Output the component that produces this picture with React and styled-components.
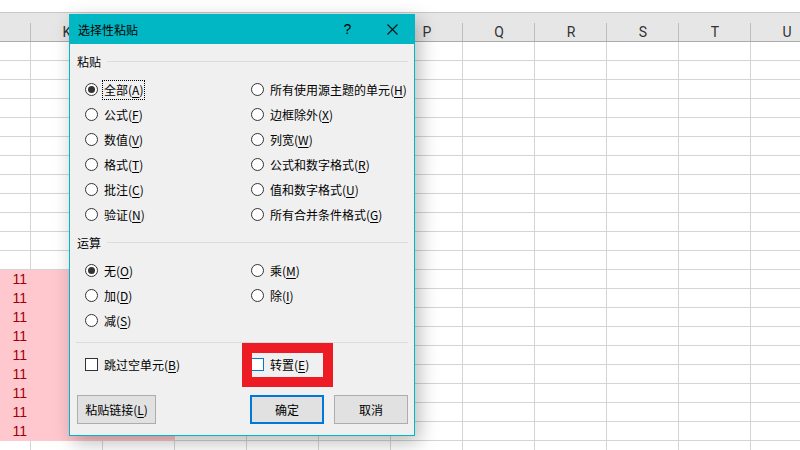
import React from "react";
import styled, { createGlobalStyle } from "styled-components";

const GlobalStyle = createGlobalStyle`
  html, body {
    margin: 0;
    padding: 0;
    background: #ffffff;
    overflow: hidden;
  }
  * { box-sizing: border-box; }
`;

const columns = ["", "K", "L", "M", "N", "O", "P", "Q", "R", "S", "T", "U"];
const ROWS = 22;
const PINK_FROM = 12;
const PINK_TO = 20;

const Page = styled.div`
  position: relative;
  width: 800px;
  height: 450px;
  overflow: hidden;
  background: #fff;
`;

const Sheet = styled.div`
  padding-top: 12px;
  display: grid;
  grid-template-columns: 31px repeat(11, 72px);
  grid-template-rows: 30px;
  grid-auto-rows: 19px;
`;

const HeadCell = styled.div`
  background: #e6e6e6 linear-gradient(#bcbcbc, #bcbcbc) right bottom / 1px 18px no-repeat;
  border-top: 1px solid #c6c6c6;
  border-bottom: 1px solid #ababab;
  font-family: Roboto, "Liberation Sans", sans-serif;
  font-size: 14px;
  color: #333;
  display: flex;
  align-items: flex-end;
  justify-content: center;
  padding-bottom: 1px;
`;

const Cell = styled.div`
  border-right: 1px solid ${(p) => (p.$pink ? "#ffc7ce" : "#d4d4d4")};
  border-bottom: 1px solid ${(p) => (p.$pink ? "#ffc7ce" : "#d4d4d4")};
  background: ${(p) => (p.$pink ? "#ffc7ce" : "#fff")};
  color: #9c0006;
  font-family: "Liberation Sans", sans-serif;
  font-size: 14px;
  line-height: 19px;
  text-align: right;
  padding-right: 3px;
`;

const Dialog = styled.div`
  position: absolute;
  left: 69px;
  top: 14px;
  width: 346px;
  height: 422px;
  border: 1px solid #00b7c3;
  background: #f0f0f0;
  box-shadow: 4px 6px 18px rgba(0, 0, 0, 0.28);
  font-family: "Noto Sans CJK SC", "Noto Sans", sans-serif;
  font-size: 12px;
  color: #000;
  display: flex;
  flex-direction: column;
`;

const TitleBar = styled.div`
  height: 30px;
  margin: -1px -1px 0;
  background: #00b7c3;
  display: flex;
  align-items: center;
  padding-left: 9px;
  font-size: 12px;
`;

const Title = styled.div`
  flex: 1;
`;

const TitleButton = styled.div`
  width: 45px;
  height: 30px;
  display: flex;
  align-items: center;
  justify-content: center;
  font-family: "Liberation Sans", sans-serif;
  font-size: 14px;
`;

const Body = styled.div`
  flex: 1;
  display: flex;
  flex-direction: column;
  padding: 0 6px 0 7px;
`;

const SectionHead = styled.div`
  height: 18px;
  margin-top: ${(p) => p.$top}px;
  display: flex;
  align-items: center;
  gap: 6px;
  &::after {
    content: "";
    flex: 1;
    height: 1px;
    background: #dcdcdc;
  }
`;

const OptionGrid = styled.div`
  margin-top: 7px;
  padding-left: 8px;
  display: grid;
  grid-template-columns: 166px 1fr;
  grid-auto-rows: 25px;
`;

const Option = styled.div`
  display: flex;
  align-items: center;
  gap: 4px;
`;

const RadioMark = styled.span`
  width: 13px;
  height: 13px;
  border-radius: 50%;
  border: 1px solid #333;
  background: #fff;
  display: flex;
  align-items: center;
  justify-content: center;
  flex: none;
  &::after {
    content: "";
    width: 7px;
    height: 7px;
    border-radius: 50%;
    background: ${(p) => (p.$on ? "#333" : "transparent")};
  }
`;

const Label = styled.span`
  padding: 1px 1px;
  line-height: 16px;
  border: 1px ${(p) => (p.$focus ? "dotted #000" : "solid transparent")};
  white-space: nowrap;
`;

const Key = styled.u`
  text-underline-offset: 2px;
`;

const Divider = styled.div`
  height: 1px;
  margin: 9px 0 0 -1px;
  background: #dcdcdc;
`;

const CheckRow = styled.div`
  margin-top: 9px;
  padding-left: 8px;
  height: 25px;
  display: grid;
  grid-template-columns: 166px 1fr;
`;

const Box = styled.span`
  width: 13px;
  height: 13px;
  border: 1px solid ${(p) => (p.$hover ? "#0078d7" : "#333")};
  background: #fff;
  flex: none;
`;

const Buttons = styled.div`
  margin-top: 18px;
  display: flex;
`;

const Button = styled.div`
  width: ${(p) => p.$w}px;
  height: 29px;
  margin-left: ${(p) => p.$gap || 0}px;
  background: #e1e1e1;
  border: ${(p) => (p.$default ? "2px solid #0078d7" : "1px solid #adadad")};
  display: flex;
  align-items: center;
  justify-content: center;
  white-space: nowrap;
`;

const Highlight = styled.div`
  position: absolute;
  left: 172px;
  top: 328px;
  width: 91px;
  height: 44px;
  border: 10px solid #ed1c24;
  pointer-events: none;
`;

const Text = ({ t, k }) => (
  <>
    {t}(<Key>{k}</Key>)
  </>
);

const pasteOpts = [
  ["全部", "A", "所有使用源主题的单元", "H"],
  ["公式", "F", "边框除外", "X"],
  ["数值", "V", "列宽", "W"],
  ["格式", "T", "公式和数字格式", "R"],
  ["批注", "C", "值和数字格式", "U"],
  ["验证", "N", "所有合并条件格式", "G"],
];

const opOpts = [
  ["无", "O", "乘", "M"],
  ["加", "D", "除", "I"],
  ["减", "S", null, null],
];

function Radio({ label, k, on, focus }) {
  return (
    <Option>
      <RadioMark $on={on} />
      <Label $focus={focus}>
        <Text t={label} k={k} />
      </Label>
    </Option>
  );
}

function OptionBlock({ rows, checkedFirst }) {
  return (
    <OptionGrid>
      {rows.map(([a, ak, b, bk], i) => (
        <React.Fragment key={a}>
          <Radio label={a} k={ak} on={checkedFirst && i === 0} focus={checkedFirst === "focus" && i === 0} />
          {b ? <Radio label={b} k={bk} /> : <span />}
        </React.Fragment>
      ))}
    </OptionGrid>
  );
}

export default function App() {
  const rows = [];
  for (let r = 0; r < ROWS; r++) {
    columns.forEach((c, ci) => {
      const pink = r >= PINK_FROM && r <= PINK_TO && ci <= 2;
      rows.push(
        <Cell key={r + "-" + ci} $pink={pink}>
          {pink ? "11" : ""}
        </Cell>
      );
    });
  }

  return (
    <Page>
      <GlobalStyle />
      <Sheet>
        {columns.map((c, i) => (
          <HeadCell key={"h" + i}>{c}</HeadCell>
        ))}
        {rows}
      </Sheet>

      <Dialog>
        <TitleBar>
          <Title>选择性粘贴</Title>
          <TitleButton>?</TitleButton>
          <TitleButton>
            <svg width="11" height="11" viewBox="0 0 11 11">
              <path d="M0.5 0.5 L10.5 10.5 M10.5 0.5 L0.5 10.5" stroke="#111" strokeWidth="1.1" fill="none" />
            </svg>
          </TitleButton>
        </TitleBar>
        <Body>
          <SectionHead $top={8}>粘贴</SectionHead>
          <OptionBlock rows={pasteOpts} checkedFirst="focus" />
          <SectionHead $top={6}>运算</SectionHead>
          <OptionBlock rows={opOpts} checkedFirst={true} />
          <Divider />
          <CheckRow>
            <Option>
              <Box />
              <Label>
                <Text t="跳过空单元" k="B" />
              </Label>
            </Option>
            <Option>
              <Box $hover />
              <Label>
                <Text t="转置" k="E" />
              </Label>
            </Option>
          </CheckRow>
          <Buttons>
            <Button $w={79}>
              <Text t="粘贴链接" k="L" />
            </Button>
            <Button $w={74} $gap={94} $default>
              确定
            </Button>
            <Button $w={74} $gap={10}>
              取消
            </Button>
          </Buttons>
        </Body>
        <Highlight />
      </Dialog>
    </Page>
  );
}
